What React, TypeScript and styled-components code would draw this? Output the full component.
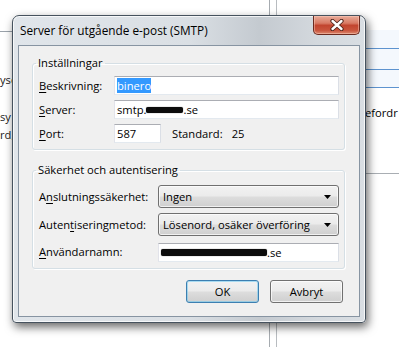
import React from "react";
import styled, { createGlobalStyle } from "styled-components";

const GlobalStyle = createGlobalStyle`
  html,
  body {
    margin: 0;
    padding: 0;
    background: #fff;
  }

  body {
    font-family: "Open Sans", "Noto Sans", sans-serif;
    color: #000;
  }
`;

const Desktop = styled.div`
  position: relative;
  width: 399px;
  height: 347px;
  overflow: hidden;
  background: #fff;
`;

// slivers of the window that sits behind the dialog
const BackLeft = styled.div`
  position: absolute;
  left: 0;
  top: 0;
  width: 16px;
  height: 100%;
  font-size: 11.2px;
  white-space: nowrap;
  color: #1a1a1a;
`;

const BackHeader = styled.div`
  height: 31px;
  border-bottom: 1px solid #9aa2aa;
`;

const BackLine = styled.div<{ $top: number }>`
  margin-top: ${(p) => p.$top}px;
  line-height: 14px;
`;

const BackDivider = styled.div`
  position: absolute;
  left: 269px;
  top: 0;
  width: 6px;
  height: 100%;
  border-left: 1px solid #a6abb0;
  border-right: 1px solid #b8bcc0;
`;

const BackRight = styled.div`
  position: absolute;
  left: 360px;
  top: 0;
  width: 39px;
  height: 100%;
  font-size: 11.2px;
  white-space: nowrap;
`;

const ListRow = styled.div<{ $h: number }>`
  height: ${(p) => p.$h}px;
  border-bottom: 1px solid #5d93cf;
  background: #f4f8fd;
`;

const ListTop = styled.div`
  height: 30px;
`;

const BackText = styled.div`
  margin-top: 18px;
  padding-left: 5px;
  line-height: 14px;
  height: 67px;
  border-bottom: 1px solid #a9aeb3;
`;

const Dialog = styled.div`
  position: absolute;
  left: 12px;
  top: 15px;
  width: 354px;
  height: 308px;
  box-sizing: border-box;
  display: flex;
  flex-direction: column;
  border: 1px solid #46525e;
  border-radius: 7px 7px 4px 4px;
  background: linear-gradient(
    to right,
    #e0e5ea 0%,
    #dadfe4 50%,
    #c4cad0 70%,
    #d3d8dd 86%,
    #d9dee3 100%
  );
  box-shadow: inset 0 0 0 1px rgba(255, 255, 255, 0.75),
    2px 4px 10px rgba(0, 0, 0, 0.6);
`;

const TitleBar = styled.div`
  height: 29px;
  display: flex;
  align-items: flex-start;
`;

const Title = styled.div`
  padding-left: 7px;
  line-height: 29px;
  font-size: 11.8px;
  white-space: nowrap;
`;

const CloseButton = styled.div`
  margin-left: auto;
  margin-right: 5px;
  width: 47px;
  height: 19px;
  box-sizing: border-box;
  border: 1px solid #6b2a1f;
  border-top: none;
  border-radius: 0 0 5px 5px;
  background: linear-gradient(
    #e8ab99 0%,
    #d87a64 40%,
    #c2452f 52%,
    #c9553d 80%,
    #dc8a70 100%
  );
  box-shadow: inset 0 0 0 1px rgba(255, 210, 195, 0.45);
  display: flex;
  align-items: center;
  justify-content: center;
`;

const Client = styled.div`
  flex: 1;
  margin: 0 5px 5px;
  border: 1px solid #8794a2;
  background: #f0f0f0;
  padding: 10px 14px 0 13px;
  display: flex;
  flex-direction: column;
  font-size: 11.2px;
`;

const GroupBox = styled.fieldset<{ $top: number; $gap: number }>`
  margin: ${(p) => p.$gap}px 0 0;
  padding: ${(p) => p.$top}px 5px 6px 6px;
  border: 1px solid #d5dfe5;
  border-radius: 3px;
  box-shadow: inset 1px 1px 0 #fff, 1px 1px 0 #fff;
  min-width: 0;
`;

const GroupTitle = styled.legend`
  padding: 0 2px;
  margin-left: -3px;
  line-height: 14px;
  font-size: 11.2px;
`;

const FormGrid = styled.div<{ $label: number; $rows: string }>`
  display: grid;
  grid-template-columns: ${(p) => p.$label}px 1fr;
  grid-template-rows: ${(p) => p.$rows};
  row-gap: 5px;
  align-items: center;
`;

const Label = styled.div`
  white-space: nowrap;
  line-height: 15px;
`;

const Key = styled.span`
  text-decoration: underline;
  text-underline-offset: 2px;
`;

const TextBox = styled.div<{ $width?: number; $end?: boolean }>`
  height: 19px;
  width: ${(p) => (p.$width ? `${p.$width}px` : "auto")};
  box-sizing: border-box;
  border: 1px solid;
  border-color: #abadb3 #dbdfe6 #e3e9ef #e2e3ea;
  background: #fff;
  padding: 0 2px;
  display: flex;
  align-items: center;
  white-space: nowrap;
  line-height: 15px;
  align-self: ${(p) => (p.$end ? "end" : "center")};
`;

const Selected = styled.span`
  background: #3399ff;
  color: #fff;
`;

const Redacted = styled.span<{ $w: number; $h: number }>`
  display: inline-block;
  width: ${(p) => p.$w}px;
  height: ${(p) => p.$h}px;
  background: #0c0c0c;
  border-radius: 2px;
  box-shadow: 0 0 1px #444;
`;

const PortField = styled.div`
  display: flex;
  align-items: center;
`;

const Standard = styled.span<{ $gap: number }>`
  margin-left: ${(p) => p.$gap}px;
`;

const Combo = styled.div`
  height: 23px;
  box-sizing: border-box;
  border: 1px solid #707070;
  border-radius: 3px;
  background: linear-gradient(#f2f2f2 0%, #ebebeb 48%, #dddddd 52%, #cfcfcf 100%);
  box-shadow: inset 0 0 0 1px rgba(255, 255, 255, 0.7);
  padding: 0 7px 0 4px;
  display: flex;
  align-items: center;
  justify-content: space-between;
  white-space: nowrap;
`;

const ButtonRow = styled.div`
  margin-top: 11px;
  padding-right: 2px;
  display: flex;
  justify-content: flex-end;
  gap: 11px;
`;

const Button = styled.div<{ $default?: boolean }>`
  width: 73px;
  height: 23px;
  box-sizing: border-box;
  border: 1px solid ${(p) => (p.$default ? "#3c7fb1" : "#707070")};
  border-radius: 3px;
  background: linear-gradient(#f2f2f2 0%, #ebebeb 48%, #dddddd 52%, #cfcfcf 100%);
  box-shadow: inset 0 0 0 1px
    ${(p) => (p.$default ? "rgba(110, 200, 240, 0.55)" : "rgba(255, 255, 255, 0.7)")};
  display: flex;
  align-items: center;
  justify-content: center;
`;

const Arrow = () => (
  <svg width="7" height="4" viewBox="0 0 7 4">
    <path d="M0 0h7L3.5 4z" fill="#000" />
  </svg>
);

const CloseGlyph = () => (
  <svg width="14" height="12" viewBox="0 0 14 12">
    <path
      d="M2.5 2L11.5 10M11.5 2L2.5 10"
      stroke="#4a2018"
      strokeWidth="4.2"
      strokeLinecap="round"
    />
    <path
      d="M2.5 2L11.5 10M11.5 2L2.5 10"
      stroke="#fff"
      strokeWidth="2.4"
      strokeLinecap="round"
    />
  </svg>
);

const App = () => {
  return (
    <>
      <GlobalStyle />
      <Desktop>
        <BackLeft>
          <BackHeader />
          <BackLine $top={41}>ysc</BackLine>
          <BackLine $top={23}>sy</BackLine>
          <BackLine $top={4}>rd,</BackLine>
        </BackLeft>
        <BackDivider />
        <BackRight>
          <ListTop />
          <ListRow $h={18} />
          <ListRow $h={20} />
          <ListRow $h={17} />
          <BackText>efordr</BackText>
        </BackRight>

        <Dialog>
          <TitleBar>
            <Title>Server för utgående e-post (SMTP)</Title>
            <CloseButton>
              <CloseGlyph />
            </CloseButton>
          </TitleBar>
          <Client>
            <GroupBox $top={6} $gap={0}>
              <GroupTitle>Inställningar</GroupTitle>
              <FormGrid $label={75} $rows="19px 19px 19px">
                <Label>
                  <Key>B</Key>eskrivning:
                </Label>
                <TextBox>
                  <Selected>binero</Selected>
                </TextBox>
                <Label>
                  <Key>S</Key>erver:
                </Label>
                <TextBox>
                  smtp.
                  <Redacted $w={37} $h={6} />
                  .se
                </TextBox>
                <Label>
                  <Key>P</Key>ort:
                </Label>
                <PortField>
                  <TextBox $width={47}>587</TextBox>
                  <Standard $gap={11}>Standard:</Standard>
                  <Standard $gap={9}>25</Standard>
                </PortField>
              </FormGrid>
            </GroupBox>

            <GroupBox $top={8} $gap={13}>
              <GroupTitle>Säkerhet och autentisering</GroupTitle>
              <FormGrid $label={119} $rows="23px 23px 21px">
                <Label>
                  A<Key>n</Key>slutningssäkerhet:
                </Label>
                <Combo>
                  Ingen
                  <Arrow />
                </Combo>
                <Label>
                  Auten<Key>t</Key>iseringmetod:
                </Label>
                <Combo>
                  Lösenord, osäker överföring
                  <Arrow />
                </Combo>
                <Label>
                  <Key>A</Key>nvändarnamn:
                </Label>
                <TextBox $end>
                  <Redacted $w={106} $h={7} />
                  .se
                </TextBox>
              </FormGrid>
            </GroupBox>

            <ButtonRow>
              <Button $default>OK</Button>
              <Button>Avbryt</Button>
            </ButtonRow>
          </Client>
        </Dialog>
      </Desktop>
    </>
  );
};

export default App;
